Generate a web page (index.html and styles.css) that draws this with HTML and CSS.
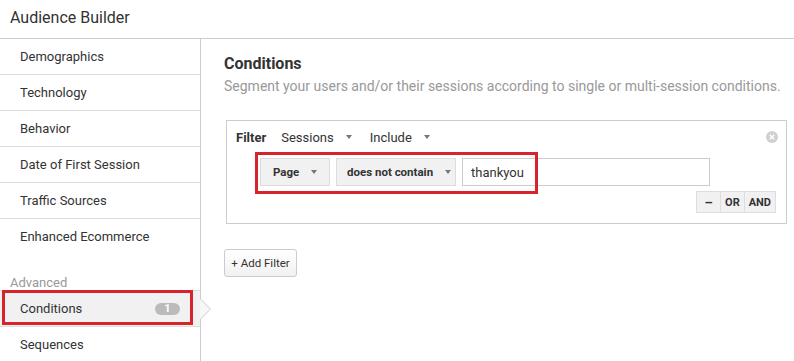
FILE: index.html
```html
<!DOCTYPE html>
<html lang="en">
<head>
    <meta charset="UTF-8">
    <meta name="viewport" content="width=device-width, initial-scale=1.0">
    <title>Audience Builder</title>
    <link rel="stylesheet" href="styles.css">
</head>
<body>
    <div class="header">Audience Builder</div>

    <div class="layout">
        <div class="sidebar">
            <div class="nav-item">Demographics</div>
            <div class="nav-item">Technology</div>
            <div class="nav-item">Behavior</div>
            <div class="nav-item">Date of First Session</div>
            <div class="nav-item">Traffic Sources</div>
            <div class="nav-item last">Enhanced Ecommerce</div>
            <div class="nav-label">Advanced</div>
            <div class="nav-item selected">
                <span>Conditions</span>
                <span class="badge">1</span>
                <span class="pointer"></span>
                <span class="mark mark-nav"></span>
            </div>
            <div class="nav-item">Sequences</div>
        </div>

        <div class="main">
            <h2>Conditions</h2>
            <p class="subtitle">Segment your users and/or their sessions according to single or multi-session conditions.</p>

            <div class="filter-box">
                <div class="filter-head">
                    <span class="filter-title">Filter</span>
                    <span class="drop">Sessions <span class="caret"></span></span>
                    <span class="drop">Include <span class="caret"></span></span>
                    <svg class="close" width="12" height="12" viewBox="0 0 12 12">
                        <circle cx="6" cy="6" r="6" fill="#d0d0d0"/>
                        <path d="M3.8 3.8 L8.2 8.2 M8.2 3.8 L3.8 8.2" stroke="#fff" stroke-width="1.4"/>
                    </svg>
                </div>

                <div class="cond-row">
                    <div class="select select-dim">Page <span class="caret"></span></div>
                    <div class="select select-op">does not contain <span class="caret"></span></div>
                    <input class="value" type="text" value="thankyou">
                    <span class="mark mark-cond"></span>
                </div>

                <div class="logic">
                    <button class="logic-btn minus">&ndash;</button>
                    <button class="logic-btn">OR</button>
                    <button class="logic-btn">AND</button>
                </div>
            </div>

            <button class="add-filter">+ Add Filter</button>
        </div>
    </div>
</body>
</html>
```

FILE: styles.css
```css
body {
    margin: 0;
    font-family: Roboto, "Liberation Sans", Arial, sans-serif;
    color: #333;
    background: #fff;
    overflow: hidden;
}
.header {
    height: 36px;
    line-height: 36px;
    padding: 0 0 2px 10px;
    font-size: 16px;
    border-bottom: 1px solid #ccc;
}
.layout {
    display: flex;
    height: 322px;
}
.sidebar {
    width: 200px;
    flex: none;
    border-right: 1px solid #ccc;
}
.nav-item {
    position: relative;
    height: 35px;
    line-height: 35px;
    padding-left: 20px;
    font-size: 13px;
    border-bottom: 1px solid #ddd;
}
.nav-item.last {
    border-bottom: none;
}
.nav-label {
    padding: 22px 0 0 10px;
    line-height: 14px;
    font-size: 13px;
    color: #999;
}
.nav-item.selected {
    display: flex;
    align-items: center;
    justify-content: space-between;
    padding-right: 20px;
    background: #f1f1f1;
    border-top: 1px solid #ddd;
}
.badge {
    width: 25px;
    height: 12px;
    line-height: 12px;
    border-radius: 6px;
    background: #bbb;
    color: #fff;
    font-size: 11px;
    font-weight: bold;
    text-align: center;
}
.pointer {
    position: absolute;
    left: 200px;
    top: 50%;
    margin-top: -11px;
    width: 0;
    height: 0;
    border-left: 11px solid #ccc;
    border-top: 11px solid transparent;
    border-bottom: 11px solid transparent;
}
.pointer::after {
    content: "";
    position: absolute;
    left: -11px;
    top: -10px;
    width: 0;
    height: 0;
    border-left: 10px solid #f7f7f7;
    border-top: 10px solid transparent;
    border-bottom: 10px solid transparent;
}
.mark {
    position: absolute;
    border: 3px solid #d8222c;
    pointer-events: none;
}
.mark-nav {
    left: 2px;
    top: -1px;
    width: 185px;
    height: 29px;
}
.main {
    flex: 1;
    padding: 15px 7px 0 23px;
}
h2 {
    margin: 0;
    font-size: 16px;
    line-height: 20px;
    font-weight: bold;
}
.subtitle {
    margin: 3px 0 0;
    font-size: 14px;
    line-height: 18px;
    color: #999;
}
.filter-box {
    margin: 25px 0 0 2px;
    border: 1px solid #ccc;
    padding: 8px 10px 10px 9px;
}
.filter-head {
    display: flex;
    align-items: center;
    height: 16px;
    font-size: 13px;
}
.filter-title {
    font-weight: bold;
}
.drop {
    margin-left: 15px;
    display: flex;
    align-items: center;
}
.drop + .drop {
    margin-left: 18px;
}
.caret {
    display: inline-block;
    width: 0;
    height: 0;
    border-left: 3px solid transparent;
    border-right: 3px solid transparent;
    border-top: 4px solid #777;
    margin-left: 12px;
}
.close {
    margin-left: auto;
    margin-right: -2px;
}
.cond-row {
    position: relative;
    display: flex;
    gap: 6px;
    margin: 13px 0 0 24px;
    height: 28px;
}
.select {
    box-sizing: border-box;
    height: 28px;
    display: flex;
    align-items: center;
    justify-content: space-between;
    white-space: nowrap;
    background: #f1f1f1;
    border: 1px solid #ddd;
    font-size: 11.5px;
    font-weight: bold;
}
.select-dim {
    width: 70px;
    padding: 0 12px;
}
.select-op {
    width: 120px;
    padding: 0 10px;
}
.value {
    box-sizing: border-box;
    width: 248px;
    height: 28px;
    border: 1px solid #ccc;
    padding: 0 8px;
    font-family: inherit;
    font-size: 13px;
    color: #333;
}
.mark-cond {
    left: -5px;
    top: -6px;
    width: 277px;
    height: 36px;
}
.logic {
    display: flex;
    justify-content: flex-end;
    margin-top: 5px;
}
.logic-btn {
    height: 22px;
    padding: 0 4px;
    background: #f1f1f1;
    border: 1px solid #ddd;
    border-left: none;
    font-family: inherit;
    font-size: 11px;
    font-weight: bold;
    color: #333;
}
.logic-btn.minus {
    border-left: 1px solid #ddd;
    width: 25px;
    font-size: 13px;
}
.add-filter {
    margin-top: 25px;
    height: 28px;
    width: 73px;
    padding: 0;
    border: 1px solid #ccc;
    border-radius: 3px;
    background: linear-gradient(#fff, #f1f1f1);
    font-family: inherit;
    font-size: 11.5px;
    color: #333;
}
```
